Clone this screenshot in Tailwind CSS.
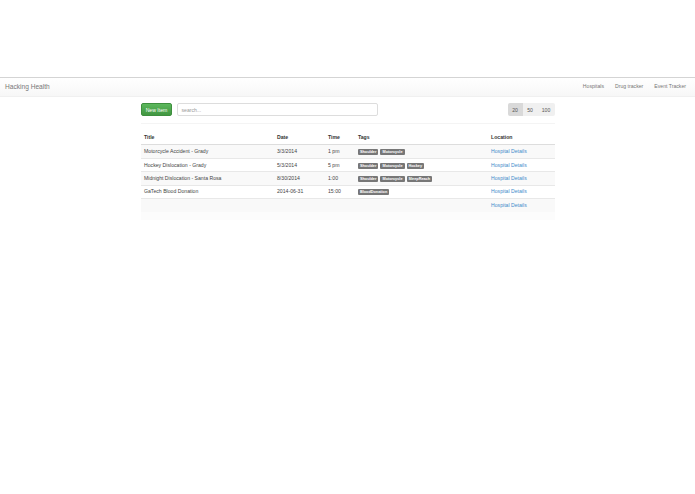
<!DOCTYPE html>
<html lang="en">
<head>
  <meta charset="UTF-8" />
  <title>Hacking Health</title>
  <script src="https://cdn.jsdelivr.net/npm/@tailwindcss/browser@4"></script>
</head>
<body class="bg-white text-[#444] font-['Liberation_Sans',Arial,sans-serif] text-[5.15px]">
  <div class="h-[77px]"></div>
  <nav class="h-[20px] flex items-center justify-between border-t border-b border-t-[#d4d4d4] border-b-[#f0f0f0] bg-gradient-to-b from-white to-[#f7f7f7] pl-[5px] pr-[9px]">
    <span class="text-[6.6px] text-[#777]">Hacking Health</span>
    <div class="flex gap-[11px] text-[5.15px] text-[#777]">
      <a>Hospitals</a>
      <a>Drug tracker</a>
      <a>Event Tracker</a>
    </div>
  </nav>
  <main class="w-[414px] ml-[141px]">
    <div class="flex items-center justify-between pt-[6px] pb-[7px] border-b border-[#f4f4f4]">
      <div class="flex items-center gap-[5px]">
        <button class="h-[13px] w-[31px] pt-[2px] rounded-[2px] border border-[#3e8f3e] bg-gradient-to-b from-[#5cb85c] to-[#419641] text-[5.15px] text-white">New Item</button>
        <div class="h-[13px] w-[201px] pt-[2px] rounded-[2px] border border-[#ddd] bg-white pl-[3.5px] flex items-center text-[5.15px] text-[#999]">search...</div>
      </div>
      <div class="flex h-[13px] text-[5.15px] text-[#555]">
        <span class="w-[15px] pt-[2px] pr-[1px] flex items-center justify-center rounded-l-[2px] bg-[#d9d9d9]">20</span>
        <span class="w-[15px] pt-[2px] pr-[1px] flex items-center justify-center bg-[#f0f0f0]">50</span>
        <span class="w-[17px] pt-[2px] pr-[1px] flex items-center justify-center rounded-r-[2px] bg-[#f0f0f0]">100</span>
      </div>
    </div>
    <table class="w-full mt-[6px] table-fixed border-collapse text-[5.15px] [&_td]:pt-[1px] [&_th]:pt-[2px]">
      <colgroup>
        <col class="w-[133px]" /><col class="w-[51px]" /><col class="w-[30px]" /><col class="w-[133px]" /><col />
      </colgroup>
      <thead>
        <tr class="h-[14px] border-b border-[#ddd] font-bold text-left text-[#333]">
          <th class="pl-[3px]">Title</th><th class="pl-[3px]">Date</th><th class="pl-[3px]">Time</th><th class="pl-[3px]">Tags</th><th class="pl-[3px]">Location</th>
        </tr>
      </thead>
      <tbody>
        <tr class="h-[14px] bg-[#f9f9f9] border-b border-[#e8e8e8]">
          <td class="pl-[3px]">Motorcycle Accident - Grady</td><td class="pl-[3px]">3/3/2014</td><td class="pl-[3px]">1 pm</td>
          <td class="pl-[3px]"><div class="flex gap-[2px]"><span class="bg-[#777] text-white font-bold text-[3.8px] leading-[6px] px-[2px] rounded-[1px]">Shoulder</span><span class="bg-[#777] text-white font-bold text-[3.8px] leading-[6px] px-[2px] rounded-[1px]">Motorcycle</span></div></td>
          <td class="pl-[3px] text-[#428bca]">Hospital Details</td>
        </tr>
        <tr class="h-[13px] border-b border-[#e8e8e8] [&>td]:pt-[2px]">
          <td class="pl-[3px]">Hockey Dislocation - Grady</td><td class="pl-[3px]">5/3/2014</td><td class="pl-[3px]">5 pm</td>
          <td class="pl-[3px]"><div class="flex gap-[2px]"><span class="bg-[#777] text-white font-bold text-[3.8px] leading-[6px] px-[2px] rounded-[1px]">Shoulder</span><span class="bg-[#777] text-white font-bold text-[3.8px] leading-[6px] px-[2px] rounded-[1px]">Motorcycle</span><span class="bg-[#777] text-white font-bold text-[3.8px] leading-[6px] px-[2px] rounded-[1px]">Hockey</span></div></td>
          <td class="pl-[3px] text-[#428bca]">Hospital Details</td>
        </tr>
        <tr class="h-[14px] bg-[#f9f9f9] border-b border-[#e8e8e8]">
          <td class="pl-[3px]">Midnight Dislocation - Santa Rosa</td><td class="pl-[3px]">8/30/2014</td><td class="pl-[3px]">1:00</td>
          <td class="pl-[3px]"><div class="flex gap-[2px]"><span class="bg-[#777] text-white font-bold text-[3.8px] leading-[6px] px-[2px] rounded-[1px]">Shoulder</span><span class="bg-[#777] text-white font-bold text-[3.8px] leading-[6px] px-[2px] rounded-[1px]">Motorcycle</span><span class="bg-[#777] text-white font-bold text-[3.8px] leading-[6px] px-[2px] rounded-[1px]">SleepReach</span></div></td>
          <td class="pl-[3px] text-[#428bca]">Hospital Details</td>
        </tr>
        <tr class="h-[13px] border-b border-[#e8e8e8]">
          <td class="pl-[3px]">GaTech Blood Donation</td><td class="pl-[3px]">2014-06-31</td><td class="pl-[3px]">15:00</td>
          <td class="pl-[3px]"><div class="flex gap-[2px]"><span class="bg-[#777] text-white font-bold text-[3.8px] leading-[6px] px-[2px] rounded-[1px]">BloodDonation</span></div></td>
          <td class="pl-[3px] text-[#428bca]">Hospital Details</td>
        </tr>
        <tr class="h-[14px] bg-[#f9f9f9]">
          <td></td><td></td><td></td><td></td>
          <td class="pl-[3px] text-[#428bca]">Hospital Details</td>
        </tr>
      </tbody>
    </table>
    <div class="h-[8px] bg-[#fcfcfc]"></div>
  </main>
</body>
</html>
